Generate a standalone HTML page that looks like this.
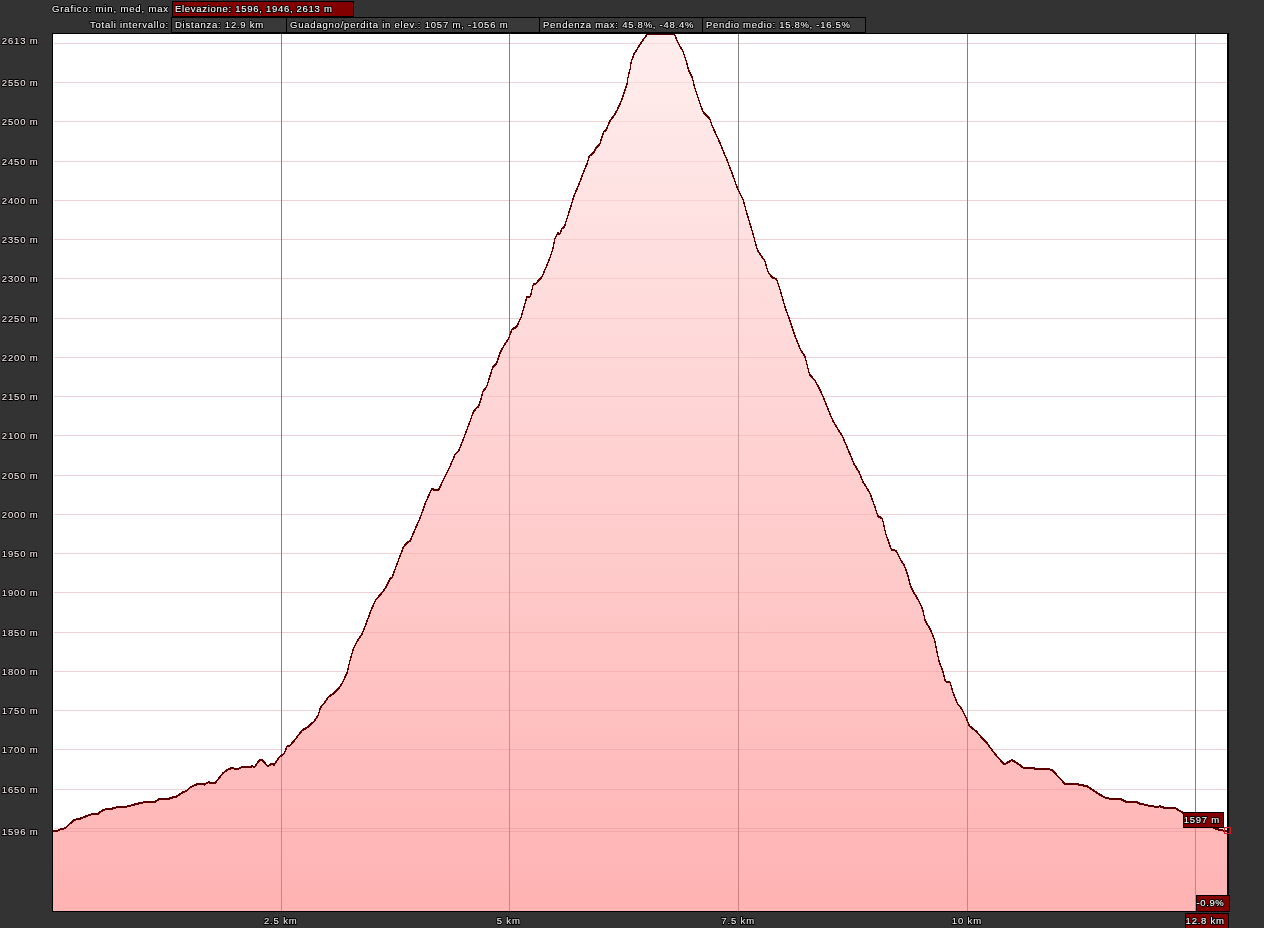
<!DOCTYPE html>
<html><head><meta charset="utf-8"><title>Grafico elevazione</title>
<style>
html,body{margin:0;padding:0;background:#333333;width:1264px;height:928px;overflow:hidden;}
svg text{font-family:"Liberation Sans",sans-serif;}
</style></head><body>
<svg width="1264" height="928" viewBox="0 0 1264 928" style="position:absolute;left:0;top:0;will-change:transform"><defs><linearGradient id="g" gradientUnits="userSpaceOnUse" x1="0" y1="34" x2="0" y2="911"><stop offset="0" stop-color="#fee1e1" stop-opacity="0.6"/><stop offset="1" stop-color="#ff8080" stop-opacity="0.6"/></linearGradient><clipPath id="c"><rect x="53" y="34" width="1174" height="877"/></clipPath></defs><rect x="52" y="33" width="1177" height="879" fill="#000"/><rect x="53" y="34" width="1174" height="877" fill="#fff"/><g clip-path="url(#c)"><rect x="54" y="43" width="1173" height="1" fill="#ecd2d4"/><rect x="54" y="82" width="1173" height="1" fill="#ecd2d4"/><rect x="54" y="121" width="1173" height="1" fill="#ecd2d4"/><rect x="54" y="161" width="1173" height="1" fill="#ecd2d4"/><rect x="54" y="200" width="1173" height="1" fill="#ecd2d4"/><rect x="54" y="239" width="1173" height="1" fill="#ecd2d4"/><rect x="54" y="278" width="1173" height="1" fill="#ecd2d4"/><rect x="54" y="318" width="1173" height="1" fill="#ecd2d4"/><rect x="54" y="357" width="1173" height="1" fill="#ecd2d4"/><rect x="54" y="396" width="1173" height="1" fill="#ecd2d4"/><rect x="54" y="435" width="1173" height="1" fill="#ecd2d4"/><rect x="54" y="475" width="1173" height="1" fill="#ecd2d4"/><rect x="54" y="514" width="1173" height="1" fill="#ecd2d4"/><rect x="54" y="553" width="1173" height="1" fill="#ecd2d4"/><rect x="54" y="592" width="1173" height="1" fill="#ecd2d4"/><rect x="54" y="632" width="1173" height="1" fill="#ecd2d4"/><rect x="54" y="671" width="1173" height="1" fill="#ecd2d4"/><rect x="54" y="710" width="1173" height="1" fill="#ecd2d4"/><rect x="54" y="749" width="1173" height="1" fill="#ecd2d4"/><rect x="54" y="789" width="1173" height="1" fill="#ecd2d4"/><rect x="54" y="828" width="1173" height="1" fill="#ecd2d4"/><rect x="54" y="831" width="1173" height="1" fill="#ecd2d4"/><rect x="281" y="34" width="1" height="877" fill="#808080"/><rect x="509" y="34" width="1" height="877" fill="#808080"/><rect x="738" y="34" width="1" height="877" fill="#808080"/><rect x="967" y="34" width="1" height="877" fill="#808080"/><rect x="1195" y="34" width="1" height="877" fill="#808080"/><path d="M53,830.9 L57.6,830.3 L60.1,829 L65.2,827.7 L74,819.5 L80.4,818 L88,815 L91.8,813.8 L97.5,813.8 L101.9,810.3 L105.7,808.7 L112,808.1 L117,806.8 L124.7,806.6 L131,805 L138.6,803 L143.7,801.8 L155,801.5 L158.9,798.6 L167.7,798.6 L171.5,797.3 L176.6,796 L182.9,791.6 L186.7,790.4 L190.5,786.6 L196.8,783.8 L201.9,783.4 L204.4,784 L208.2,781.8 L214.9,782.8 L222.6,773.1 L227.8,769 L232.3,767.3 L236.9,769 L241.4,766.9 L250.5,766.7 L252.4,765.6 L254.3,766.9 L259.5,759.6 L262.7,760 L267.9,766 L270.5,763.8 L274.4,764.1 L278.9,757 L284.1,753.1 L287.3,745.3 L289.3,746 L295.7,738.2 L302.2,729.8 L307.4,726.8 L313.8,721.1 L318.4,714.3 L320.3,707.2 L324.2,702.6 L328.1,696.8 L333.2,693.2 L338.4,688.4 L342.1,683.1 L347.2,671.9 L349.8,660.7 L353.3,648.6 L357.6,640 L361.9,634 L366.2,622.8 L371.4,609 L375.7,599.5 L381.7,592.6 L386,586.6 L390.3,577.9 L392.1,577.1 L395.5,567.6 L399,558.1 L403.3,546.9 L406,543.4 L410.3,540 L415.5,527.9 L420.7,515.9 L425.9,501.2 L431.9,487.9 L434.5,489.7 L438.8,489.1 L444.8,476.2 L450,465.9 L455.2,453.8 L458.6,450.3 L463.8,437.4 L469,423.6 L473.3,411.6 L476.7,407.2 L478.4,406.4 L481,398.6 L482.8,391.2 L486.5,386.6 L492.9,366.4 L496.6,362.8 L500.2,351.8 L504.8,343.6 L508.5,338.1 L512.1,328.9 L516.7,326.2 L521.3,316.1 L524.9,303.3 L526.8,296.8 L530.4,295.9 L533.2,284 L535.9,283.1 L542.3,275.8 L548.8,260.2 L552.4,250.1 L555.2,237.3 L557.9,232.7 L559.7,233.7 L562.1,227.9 L564.3,226.7 L568.1,214.6 L571.9,202.6 L574.1,195 L578.7,184.5 L583.2,172.4 L587,163.3 L589.2,155.8 L593.7,152 L596,147.5 L599.8,143.7 L603.5,131.7 L606.6,128.7 L609.6,121.1 L614.9,113.6 L616.8,110.4 L621.6,99.8 L624.5,91 L627,83.3 L628.4,74.6 L629.9,69.7 L631.3,61 L634.2,53.2 L639.1,45.5 L643,39.6 L647.3,33.8 L674.5,33.8 L676.9,39.6 L679.8,45.5 L682.7,50.3 L686.6,62 L688.6,69.7 L692.4,77.5 L694.4,86.2 L697.3,94.9 L700.2,103.7 L703.1,111.4 L709.8,118.3 L712.1,125.1 L719.6,141.7 L727.1,159.8 L731.7,171.8 L737.7,188.4 L743,199 L746.8,212.6 L751.3,227.6 L754.3,238.2 L757.3,249.2 L761.9,256.5 L764.7,260.1 L768.3,272.1 L772.9,277.5 L776.6,278.5 L780.2,289.5 L784.8,305.9 L789.4,318.8 L794.9,335.2 L800.4,349 L805,356.3 L809.5,373.7 L815,380.1 L820.5,390.2 L825.1,401.2 L828.2,409.2 L832.8,420.1 L838.3,429.3 L842,434.8 L847.5,447.6 L853.9,463.2 L859.4,472.3 L863,481.5 L869.5,491.6 L874.9,506.2 L877.7,515.4 L882.3,518.1 L885.9,533.7 L891.4,549.3 L896,550.2 L900.6,559.3 L904.2,564.6 L907.8,574.7 L910.6,585.6 L913.3,591.1 L918.8,600.3 L922.5,608.5 L925.2,620.4 L929.8,627.8 L934.4,638.8 L939,660.7 L942.6,669.9 L945.4,680.9 L950,681.8 L953.6,693.7 L957.3,702.9 L961.8,708.4 L965.5,715.7 L969.2,724.8 L970.1,725.9 L976.5,731 L982.8,738.6 L986.6,741.8 L990.4,747.5 L998,757 L1004.3,763.9 L1011.9,759.5 L1015.7,761.8 L1023.3,767.1 L1030.9,767.7 L1039.7,768.4 L1048.6,768.4 L1052.4,769.9 L1065.1,783.5 L1071.4,783.3 L1080.3,784.2 L1087.8,786.1 L1094.2,790.5 L1099.2,793.7 L1105.6,797.5 L1108.5,797.8 L1111.4,798.9 L1121.4,798.9 L1123.5,800 L1127,801.8 L1137,801.8 L1138.5,802.8 L1142.7,803.5 L1145.6,804.6 L1149.9,805.3 L1154.1,806 L1157,807.1 L1159.8,805.7 L1162.7,806.7 L1166.2,807.8 L1175.5,807.8 L1182.6,812.1 L1214,827.6 L1219.6,829.3 L1225.1,830.4 L1228,830.8 L1228,912 L53,912 Z" fill="url(#g)"/><g fill="none" stroke="#5a0000" stroke-width="1.1" stroke-linejoin="round" shape-rendering="crispEdges"><path d="M53,830.9 L57.6,830.3 L60.1,829 L65.2,827.7 L74,819.5 L80.4,818 L88,815 L91.8,813.8 L97.5,813.8 L101.9,810.3 L105.7,808.7 L112,808.1 L117,806.8 L124.7,806.6 L131,805 L138.6,803 L143.7,801.8 L155,801.5 L158.9,798.6 L167.7,798.6 L171.5,797.3 L176.6,796 L182.9,791.6 L186.7,790.4 L190.5,786.6 L196.8,783.8 L201.9,783.4 L204.4,784 L208.2,781.8 L214.9,782.8 L222.6,773.1 L227.8,769 L232.3,767.3 L236.9,769 L241.4,766.9 L250.5,766.7 L252.4,765.6 L254.3,766.9 L259.5,759.6 L262.7,760 L267.9,766 L270.5,763.8 L274.4,764.1 L278.9,757 L284.1,753.1 L287.3,745.3 L289.3,746 L295.7,738.2 L302.2,729.8 L307.4,726.8 L313.8,721.1 L318.4,714.3 L320.3,707.2 L324.2,702.6 L328.1,696.8 L333.2,693.2 L338.4,688.4 L342.1,683.1 L347.2,671.9 L349.8,660.7 L353.3,648.6 L357.6,640 L361.9,634 L366.2,622.8 L371.4,609 L375.7,599.5 L381.7,592.6 L386,586.6 L390.3,577.9 L392.1,577.1 L395.5,567.6 L399,558.1 L403.3,546.9 L406,543.4 L410.3,540 L415.5,527.9 L420.7,515.9 L425.9,501.2 L431.9,487.9 L434.5,489.7 L438.8,489.1 L444.8,476.2 L450,465.9 L455.2,453.8 L458.6,450.3 L463.8,437.4 L469,423.6 L473.3,411.6 L476.7,407.2 L478.4,406.4 L481,398.6 L482.8,391.2 L486.5,386.6 L492.9,366.4 L496.6,362.8 L500.2,351.8 L504.8,343.6 L508.5,338.1 L512.1,328.9 L516.7,326.2 L521.3,316.1 L524.9,303.3 L526.8,296.8 L530.4,295.9 L533.2,284 L535.9,283.1 L542.3,275.8 L548.8,260.2 L552.4,250.1 L555.2,237.3 L557.9,232.7 L559.7,233.7 L562.1,227.9 L564.3,226.7 L568.1,214.6 L571.9,202.6 L574.1,195 L578.7,184.5 L583.2,172.4 L587,163.3 L589.2,155.8 L593.7,152 L596,147.5 L599.8,143.7 L603.5,131.7 L606.6,128.7 L609.6,121.1 L614.9,113.6 L616.8,110.4 L621.6,99.8 L624.5,91 L627,83.3 L628.4,74.6 L629.9,69.7 L631.3,61 L634.2,53.2 L639.1,45.5 L643,39.6 L647.3,33.8 L674.5,33.8 L676.9,39.6 L679.8,45.5 L682.7,50.3 L686.6,62 L688.6,69.7 L692.4,77.5 L694.4,86.2 L697.3,94.9 L700.2,103.7 L703.1,111.4 L709.8,118.3 L712.1,125.1 L719.6,141.7 L727.1,159.8 L731.7,171.8 L737.7,188.4 L743,199 L746.8,212.6 L751.3,227.6 L754.3,238.2 L757.3,249.2 L761.9,256.5 L764.7,260.1 L768.3,272.1 L772.9,277.5 L776.6,278.5 L780.2,289.5 L784.8,305.9 L789.4,318.8 L794.9,335.2 L800.4,349 L805,356.3 L809.5,373.7 L815,380.1 L820.5,390.2 L825.1,401.2 L828.2,409.2 L832.8,420.1 L838.3,429.3 L842,434.8 L847.5,447.6 L853.9,463.2 L859.4,472.3 L863,481.5 L869.5,491.6 L874.9,506.2 L877.7,515.4 L882.3,518.1 L885.9,533.7 L891.4,549.3 L896,550.2 L900.6,559.3 L904.2,564.6 L907.8,574.7 L910.6,585.6 L913.3,591.1 L918.8,600.3 L922.5,608.5 L925.2,620.4 L929.8,627.8 L934.4,638.8 L939,660.7 L942.6,669.9 L945.4,680.9 L950,681.8 L953.6,693.7 L957.3,702.9 L961.8,708.4 L965.5,715.7 L969.2,724.8 L970.1,725.9 L976.5,731 L982.8,738.6 L986.6,741.8 L990.4,747.5 L998,757 L1004.3,763.9 L1011.9,759.5 L1015.7,761.8 L1023.3,767.1 L1030.9,767.7 L1039.7,768.4 L1048.6,768.4 L1052.4,769.9 L1065.1,783.5 L1071.4,783.3 L1080.3,784.2 L1087.8,786.1 L1094.2,790.5 L1099.2,793.7 L1105.6,797.5 L1108.5,797.8 L1111.4,798.9 L1121.4,798.9 L1123.5,800 L1127,801.8 L1137,801.8 L1138.5,802.8 L1142.7,803.5 L1145.6,804.6 L1149.9,805.3 L1154.1,806 L1157,807.1 L1159.8,805.7 L1162.7,806.7 L1166.2,807.8 L1175.5,807.8 L1182.6,812.1 L1214,827.6 L1219.6,829.3 L1225.1,830.4 L1228,830.8"/><path d="M53,830.9 L57.6,830.3 L60.1,829 L65.2,827.7 L74,819.5 L80.4,818 L88,815 L91.8,813.8 L97.5,813.8 L101.9,810.3 L105.7,808.7 L112,808.1 L117,806.8 L124.7,806.6 L131,805 L138.6,803 L143.7,801.8 L155,801.5 L158.9,798.6 L167.7,798.6 L171.5,797.3 L176.6,796 L182.9,791.6 L186.7,790.4 L190.5,786.6 L196.8,783.8 L201.9,783.4 L204.4,784 L208.2,781.8 L214.9,782.8 L222.6,773.1 L227.8,769 L232.3,767.3 L236.9,769 L241.4,766.9 L250.5,766.7 L252.4,765.6 L254.3,766.9 L259.5,759.6 L262.7,760 L267.9,766 L270.5,763.8 L274.4,764.1 L278.9,757 L284.1,753.1 L287.3,745.3 L289.3,746 L295.7,738.2 L302.2,729.8 L307.4,726.8 L313.8,721.1 L318.4,714.3 L320.3,707.2 L324.2,702.6 L328.1,696.8 L333.2,693.2 L338.4,688.4 L342.1,683.1 L347.2,671.9 L349.8,660.7 L353.3,648.6 L357.6,640 L361.9,634 L366.2,622.8 L371.4,609 L375.7,599.5 L381.7,592.6 L386,586.6 L390.3,577.9 L392.1,577.1 L395.5,567.6 L399,558.1 L403.3,546.9 L406,543.4 L410.3,540 L415.5,527.9 L420.7,515.9 L425.9,501.2 L431.9,487.9 L434.5,489.7 L438.8,489.1 L444.8,476.2 L450,465.9 L455.2,453.8 L458.6,450.3 L463.8,437.4 L469,423.6 L473.3,411.6 L476.7,407.2 L478.4,406.4 L481,398.6 L482.8,391.2 L486.5,386.6 L492.9,366.4 L496.6,362.8 L500.2,351.8 L504.8,343.6 L508.5,338.1 L512.1,328.9 L516.7,326.2 L521.3,316.1 L524.9,303.3 L526.8,296.8 L530.4,295.9 L533.2,284 L535.9,283.1 L542.3,275.8 L548.8,260.2 L552.4,250.1 L555.2,237.3 L557.9,232.7 L559.7,233.7 L562.1,227.9 L564.3,226.7 L568.1,214.6 L571.9,202.6 L574.1,195 L578.7,184.5 L583.2,172.4 L587,163.3 L589.2,155.8 L593.7,152 L596,147.5 L599.8,143.7 L603.5,131.7 L606.6,128.7 L609.6,121.1 L614.9,113.6 L616.8,110.4 L621.6,99.8 L624.5,91 L627,83.3 L628.4,74.6 L629.9,69.7 L631.3,61 L634.2,53.2 L639.1,45.5 L643,39.6 L647.3,33.8 L674.5,33.8 L676.9,39.6 L679.8,45.5 L682.7,50.3 L686.6,62 L688.6,69.7 L692.4,77.5 L694.4,86.2 L697.3,94.9 L700.2,103.7 L703.1,111.4 L709.8,118.3 L712.1,125.1 L719.6,141.7 L727.1,159.8 L731.7,171.8 L737.7,188.4 L743,199 L746.8,212.6 L751.3,227.6 L754.3,238.2 L757.3,249.2 L761.9,256.5 L764.7,260.1 L768.3,272.1 L772.9,277.5 L776.6,278.5 L780.2,289.5 L784.8,305.9 L789.4,318.8 L794.9,335.2 L800.4,349 L805,356.3 L809.5,373.7 L815,380.1 L820.5,390.2 L825.1,401.2 L828.2,409.2 L832.8,420.1 L838.3,429.3 L842,434.8 L847.5,447.6 L853.9,463.2 L859.4,472.3 L863,481.5 L869.5,491.6 L874.9,506.2 L877.7,515.4 L882.3,518.1 L885.9,533.7 L891.4,549.3 L896,550.2 L900.6,559.3 L904.2,564.6 L907.8,574.7 L910.6,585.6 L913.3,591.1 L918.8,600.3 L922.5,608.5 L925.2,620.4 L929.8,627.8 L934.4,638.8 L939,660.7 L942.6,669.9 L945.4,680.9 L950,681.8 L953.6,693.7 L957.3,702.9 L961.8,708.4 L965.5,715.7 L969.2,724.8 L970.1,725.9 L976.5,731 L982.8,738.6 L986.6,741.8 L990.4,747.5 L998,757 L1004.3,763.9 L1011.9,759.5 L1015.7,761.8 L1023.3,767.1 L1030.9,767.7 L1039.7,768.4 L1048.6,768.4 L1052.4,769.9 L1065.1,783.5 L1071.4,783.3 L1080.3,784.2 L1087.8,786.1 L1094.2,790.5 L1099.2,793.7 L1105.6,797.5 L1108.5,797.8 L1111.4,798.9 L1121.4,798.9 L1123.5,800 L1127,801.8 L1137,801.8 L1138.5,802.8 L1142.7,803.5 L1145.6,804.6 L1149.9,805.3 L1154.1,806 L1157,807.1 L1159.8,805.7 L1162.7,806.7 L1166.2,807.8 L1175.5,807.8 L1182.6,812.1 L1214,827.6 L1219.6,829.3 L1225.1,830.4 L1228,830.8" transform="translate(0 1)"/></g></g><rect x="1224.5" y="827.5" width="6" height="6" fill="none" stroke="#d42020" stroke-width="1"/><rect x="1183" y="812" width="41" height="16" fill="#000"/><rect x="1184" y="813" width="39" height="14" fill="#820000"/><rect x="1196" y="895" width="34" height="17" fill="#000"/><rect x="1197" y="896" width="32" height="15" fill="#820000"/><rect x="1185" y="913" width="44" height="16" fill="#000"/><rect x="1186" y="914" width="42" height="15" fill="#820000"/><rect x="172" y="1" width="182" height="16" fill="#000"/><rect x="173" y="2" width="180" height="14" fill="#820000"/><rect x="171" y="17" width="695" height="16" fill="#000"/><rect x="172" y="18" width="114" height="14" fill="#393939"/><rect x="287" y="18" width="252" height="14" fill="#393939"/><rect x="540" y="18" width="162" height="14" fill="#393939"/><rect x="703" y="18" width="162" height="14" fill="#393939"/><g font-family="Liberation Sans, sans-serif" font-size="9.5px" fill="#000" stroke="#000" stroke-width="2" stroke-linejoin="round"><text x="1.8" y="44" letter-spacing="0.84">2613 m</text><text x="1.8" y="86" letter-spacing="0.84">2550 m</text><text x="1.8" y="125" letter-spacing="0.84">2500 m</text><text x="1.8" y="165" letter-spacing="0.84">2450 m</text><text x="1.8" y="204" letter-spacing="0.84">2400 m</text><text x="1.8" y="243" letter-spacing="0.84">2350 m</text><text x="1.8" y="282" letter-spacing="0.84">2300 m</text><text x="1.8" y="322" letter-spacing="0.84">2250 m</text><text x="1.8" y="361" letter-spacing="0.84">2200 m</text><text x="1.8" y="400" letter-spacing="0.84">2150 m</text><text x="1.8" y="439" letter-spacing="0.84">2100 m</text><text x="1.8" y="479" letter-spacing="0.84">2050 m</text><text x="1.8" y="518" letter-spacing="0.84">2000 m</text><text x="1.8" y="557" letter-spacing="0.84">1950 m</text><text x="1.8" y="596" letter-spacing="0.84">1900 m</text><text x="1.8" y="636" letter-spacing="0.84">1850 m</text><text x="1.8" y="675" letter-spacing="0.84">1800 m</text><text x="1.8" y="714" letter-spacing="0.84">1750 m</text><text x="1.8" y="753" letter-spacing="0.84">1700 m</text><text x="1.8" y="793" letter-spacing="0.84">1650 m</text><text x="1.8" y="835" letter-spacing="0.84">1596 m</text><text x="263.9" y="924" letter-spacing="0.85">2.5 km</text><text x="496.7" y="924" letter-spacing="0.85">5 km</text><text x="721.3" y="924" letter-spacing="0.85">7.5 km</text><text x="951.8" y="924" letter-spacing="0.85">10 km</text><text x="1183.7" y="823" letter-spacing="0.74">1597 m</text><text x="1196.5" y="906" letter-spacing="0.62">-0.9%</text><text x="1185.6" y="924" letter-spacing="0.77">12.8 km</text><text x="52" y="12" letter-spacing="0.85">Grafico: min, med, max</text><text x="175" y="12" letter-spacing="0.71">Elevazione: 1596, 1946, 2613 m</text><text x="90" y="28" letter-spacing="0.74">Totali intervallo:</text><text x="175" y="28" letter-spacing="0.76">Distanza: 12.9 km</text><text x="290" y="28" letter-spacing="0.79">Guadagno/perdita in elev.: 1057 m, -1056 m</text><text x="543" y="28" letter-spacing="0.75">Pendenza max: 45.8%, -48.4%</text><text x="706" y="28" letter-spacing="0.7">Pendio medio: 15.8%, -16.5%</text></g><g font-family="Liberation Sans, sans-serif" font-size="9.5px" stroke-width="0.1"><text x="1.8" y="44" letter-spacing="0.84" fill="#f6e8e8" stroke="#f6e8e8">2613 m</text><text x="1.8" y="86" letter-spacing="0.84" fill="#f6e8e8" stroke="#f6e8e8">2550 m</text><text x="1.8" y="125" letter-spacing="0.84" fill="#f6e8e8" stroke="#f6e8e8">2500 m</text><text x="1.8" y="165" letter-spacing="0.84" fill="#f6e8e8" stroke="#f6e8e8">2450 m</text><text x="1.8" y="204" letter-spacing="0.84" fill="#f6e8e8" stroke="#f6e8e8">2400 m</text><text x="1.8" y="243" letter-spacing="0.84" fill="#f6e8e8" stroke="#f6e8e8">2350 m</text><text x="1.8" y="282" letter-spacing="0.84" fill="#f6e8e8" stroke="#f6e8e8">2300 m</text><text x="1.8" y="322" letter-spacing="0.84" fill="#f6e8e8" stroke="#f6e8e8">2250 m</text><text x="1.8" y="361" letter-spacing="0.84" fill="#f6e8e8" stroke="#f6e8e8">2200 m</text><text x="1.8" y="400" letter-spacing="0.84" fill="#f6e8e8" stroke="#f6e8e8">2150 m</text><text x="1.8" y="439" letter-spacing="0.84" fill="#f6e8e8" stroke="#f6e8e8">2100 m</text><text x="1.8" y="479" letter-spacing="0.84" fill="#f6e8e8" stroke="#f6e8e8">2050 m</text><text x="1.8" y="518" letter-spacing="0.84" fill="#f6e8e8" stroke="#f6e8e8">2000 m</text><text x="1.8" y="557" letter-spacing="0.84" fill="#f6e8e8" stroke="#f6e8e8">1950 m</text><text x="1.8" y="596" letter-spacing="0.84" fill="#f6e8e8" stroke="#f6e8e8">1900 m</text><text x="1.8" y="636" letter-spacing="0.84" fill="#f6e8e8" stroke="#f6e8e8">1850 m</text><text x="1.8" y="675" letter-spacing="0.84" fill="#f6e8e8" stroke="#f6e8e8">1800 m</text><text x="1.8" y="714" letter-spacing="0.84" fill="#f6e8e8" stroke="#f6e8e8">1750 m</text><text x="1.8" y="753" letter-spacing="0.84" fill="#f6e8e8" stroke="#f6e8e8">1700 m</text><text x="1.8" y="793" letter-spacing="0.84" fill="#f6e8e8" stroke="#f6e8e8">1650 m</text><text x="1.8" y="835" letter-spacing="0.84" fill="#f6e8e8" stroke="#f6e8e8">1596 m</text><text x="263.9" y="924" letter-spacing="0.85" fill="#ececec" stroke="#ececec">2.5 km</text><text x="496.7" y="924" letter-spacing="0.85" fill="#ececec" stroke="#ececec">5 km</text><text x="721.3" y="924" letter-spacing="0.85" fill="#ececec" stroke="#ececec">7.5 km</text><text x="951.8" y="924" letter-spacing="0.85" fill="#ececec" stroke="#ececec">10 km</text><text x="1183.7" y="823" letter-spacing="0.74" fill="#ffffff" stroke="#ffffff">1597 m</text><text x="1196.5" y="906" letter-spacing="0.62" fill="#ffffff" stroke="#ffffff">-0.9%</text><text x="1185.6" y="924" letter-spacing="0.77" fill="#ffffff" stroke="#ffffff">12.8 km</text><text x="52" y="12" letter-spacing="0.85" fill="#f6f6f6" stroke="#f6f6f6">Grafico: min, med, max</text><text x="175" y="12" letter-spacing="0.71" fill="#ffffff" stroke="#ffffff">Elevazione: 1596, 1946, 2613 m</text><text x="90" y="28" letter-spacing="0.74" fill="#f6f6f6" stroke="#f6f6f6">Totali intervallo:</text><text x="175" y="28" letter-spacing="0.76" fill="#f8f8f8" stroke="#f8f8f8">Distanza: 12.9 km</text><text x="290" y="28" letter-spacing="0.79" fill="#f8f8f8" stroke="#f8f8f8">Guadagno/perdita in elev.: 1057 m, -1056 m</text><text x="543" y="28" letter-spacing="0.75" fill="#f8f8f8" stroke="#f8f8f8">Pendenza max: 45.8%, -48.4%</text><text x="706" y="28" letter-spacing="0.7" fill="#f8f8f8" stroke="#f8f8f8">Pendio medio: 15.8%, -16.5%</text></g></svg>
</body></html>
